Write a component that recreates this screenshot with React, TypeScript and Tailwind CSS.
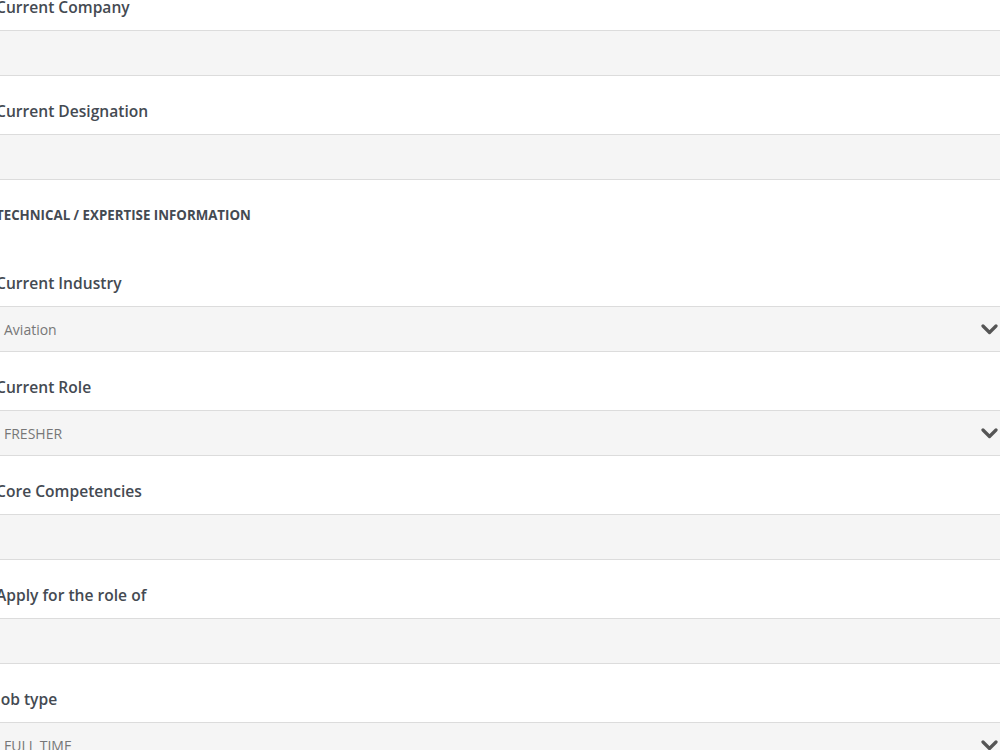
import React from 'react';

type Field = {
  label: string;
  value?: string;
  select?: boolean;
};

const personal: Field[] = [
  { label: 'Current Company' },
  { label: 'Current Designation' },
];

const technical: Field[] = [
  { label: 'Current Industry', value: 'Aviation', select: true },
  { label: 'Current Role', value: 'FRESHER', select: true },
  { label: 'Core Competencies' },
  { label: 'Apply for the role of' },
  { label: 'Job type', value: 'FULL TIME', select: true },
];

function Chevron() {
  return (
    <svg width="17" height="11" viewBox="0 0 17 11" className="shrink-0">
      <polyline
        points="2,2 8.5,8.5 15,2"
        fill="none"
        stroke="#555"
        strokeWidth="3.2"
        strokeLinecap="round"
        strokeLinejoin="round"
      />
    </svg>
  );
}

function FormField({ field }: { field: Field }) {
  return (
    <div className="mb-[23px]">
      <label className="mb-[11px] block text-[15.6px] leading-6 font-semibold text-[#444a52]">
        {field.label}
      </label>
      <div className="flex h-[46px] items-center justify-between border-y border-[#dcdcdc] bg-[#f5f5f5] pr-[10px] pl-2">
        <span className="text-[14px] text-[#777]">{field.value}</span>
        {field.select && <Chevron />}
      </div>
    </div>
  );
}

export default function App() {
  return (
    <div className="h-[750px] w-[1000px] overflow-hidden bg-white font-['Open_Sans',sans-serif]">
      <div className="-mt-[5px] -ml-1 w-[1012px]">
        {personal.map((f) => (
          <FormField key={f.label} field={f} />
        ))}
        <h4 className="mt-[13px] mb-[44px] text-[13.3px] leading-6 font-bold text-[#444a52] uppercase">
          Technical / Expertise Information
        </h4>
        {technical.map((f) => (
          <FormField key={f.label} field={f} />
        ))}
      </div>
    </div>
  );
}
